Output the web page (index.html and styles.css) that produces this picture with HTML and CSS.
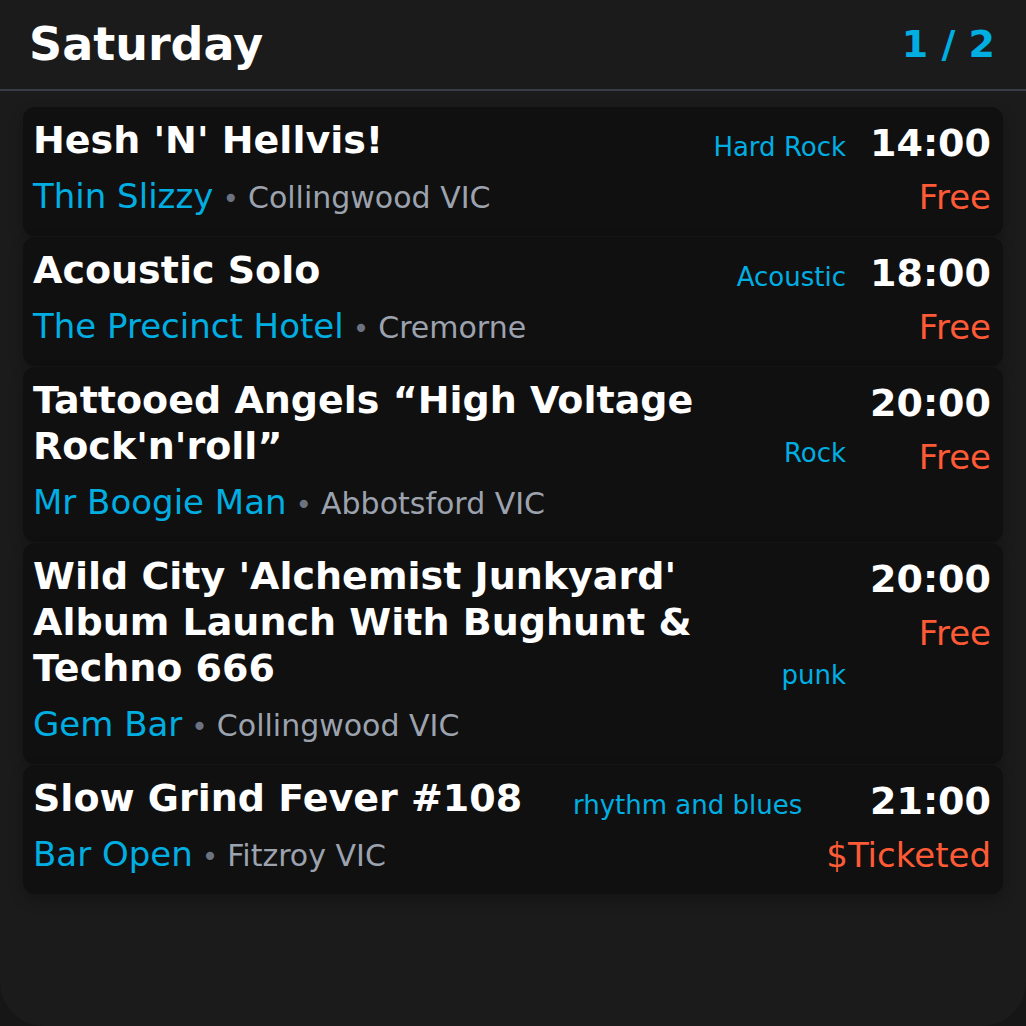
FILE: index.html
```html
<!DOCTYPE html>
<html lang="en">
<head>
<meta charset="utf-8">
<title>Saturday gigs</title>
<link rel="stylesheet" href="styles.css">
</head>
<body>
<div class="app">
  <header class="header">
    <h1 class="day">Saturday</h1>
    <div class="pager">1 / 2</div>
  </header>
  <main class="list">
    <article class="gig">
      <div class="main">
        <div class="title-row">
          <div class="title">Hesh 'N' Hellvis!</div>
          <div class="genre">Hard Rock</div>
        </div>
        <div class="where"><span class="venue">Thin Slizzy</span><span class="dot">•</span><span class="suburb">Collingwood VIC</span></div>
      </div>
      <div class="side">
        <div class="time">14:00</div>
        <div class="price">Free</div>
      </div>
    </article>
    <article class="gig">
      <div class="main">
        <div class="title-row">
          <div class="title">Acoustic Solo</div>
          <div class="genre">Acoustic</div>
        </div>
        <div class="where"><span class="venue">The Precinct Hotel</span><span class="dot">•</span><span class="suburb">Cremorne</span></div>
      </div>
      <div class="side">
        <div class="time">18:00</div>
        <div class="price">Free</div>
      </div>
    </article>
    <article class="gig">
      <div class="main">
        <div class="title-row">
          <div class="title">Tattooed Angels “High Voltage Rock'n'roll”</div>
          <div class="genre">Rock</div>
        </div>
        <div class="where"><span class="venue">Mr Boogie Man</span><span class="dot">•</span><span class="suburb">Abbotsford VIC</span></div>
      </div>
      <div class="side">
        <div class="time">20:00</div>
        <div class="price">Free</div>
      </div>
    </article>
    <article class="gig">
      <div class="main">
        <div class="title-row">
          <div class="title">Wild City 'Alchemist Junkyard' Album Launch With Bughunt &amp; Techno 666</div>
          <div class="genre">punk</div>
        </div>
        <div class="where"><span class="venue">Gem Bar</span><span class="dot">•</span><span class="suburb">Collingwood VIC</span></div>
      </div>
      <div class="side">
        <div class="time">20:00</div>
        <div class="price">Free</div>
      </div>
    </article>
    <article class="gig">
      <div class="main">
        <div class="title-row">
          <div class="title">Slow Grind Fever #108</div>
          <div class="genre">rhythm and blues</div>
        </div>
        <div class="where"><span class="venue">Bar Open</span><span class="dot">•</span><span class="suburb">Fitzroy VIC</span></div>
      </div>
      <div class="side">
        <div class="time">21:00</div>
        <div class="price">$Ticketed</div>
      </div>
    </article>
  </main>
</div>
</body>
</html>
```
FILE: styles.css
```css
* { box-sizing: border-box; }
html, body {
  margin: 0;
  padding: 0;
  background: #161616;
  font-family: "DejaVu Sans", "Liberation Sans", sans-serif;
}
.app {
  min-height: 100vh;
  background: #1b1b1b;
  border-radius: 0 0 44px 44px;
  overflow: hidden;
}
.header {
  height: 91px;
  display: flex;
  align-items: center;
  justify-content: space-between;
  padding: 0 31px 2px 29px;
  border-bottom: 2px solid #373d48;
}
.day {
  margin: 0;
  font-size: 46px;
  font-weight: bold;
  color: #ffffff;
  line-height: 1;
}
.pager {
  font-size: 38px;
  font-weight: bold;
  color: #00aee2;
  line-height: 1;
}
.list {
  padding: 16px 23px 0;
  display: flex;
  flex-direction: column;
  gap: 1px;
}
.gig {
  display: flex;
  gap: 24px;
  padding: 10px 12px 12px 10px;
  background: #101010;
  border-radius: 12px;
  box-shadow: 0 6px 14px rgba(0, 0, 0, 0.25);
}
.main {
  flex: 1;
  min-width: 0;
}
.title-row {
  display: flex;
  gap: 16px;
}
.title {
  flex: 1;
  font-size: 38px;
  line-height: 46px;
  font-weight: bold;
  color: #ffffff;
}
.genre {
  align-self: flex-end;
  font-size: 26px;
  line-height: 32px;
  color: #00aee2;
  white-space: nowrap;
}
.where {
  margin-top: 8px;
  font-size: 34px;
  line-height: 51px;
  white-space: nowrap;
}
.venue { color: #00aee2; }
.dot {
  color: #6b7280;
  font-size: 28px;
  margin: 0 9px;
}
.suburb {
  color: #9ca3af;
  font-size: 30px;
}
.side {
  display: flex;
  flex-direction: column;
  align-items: flex-end;
}
.time {
  font-size: 38px;
  line-height: 52px;
  font-weight: bold;
  color: #ffffff;
}
.price {
  margin-top: 8px;
  font-size: 34px;
  line-height: 40px;
  color: #ff5a36;
  white-space: nowrap;
}
```
